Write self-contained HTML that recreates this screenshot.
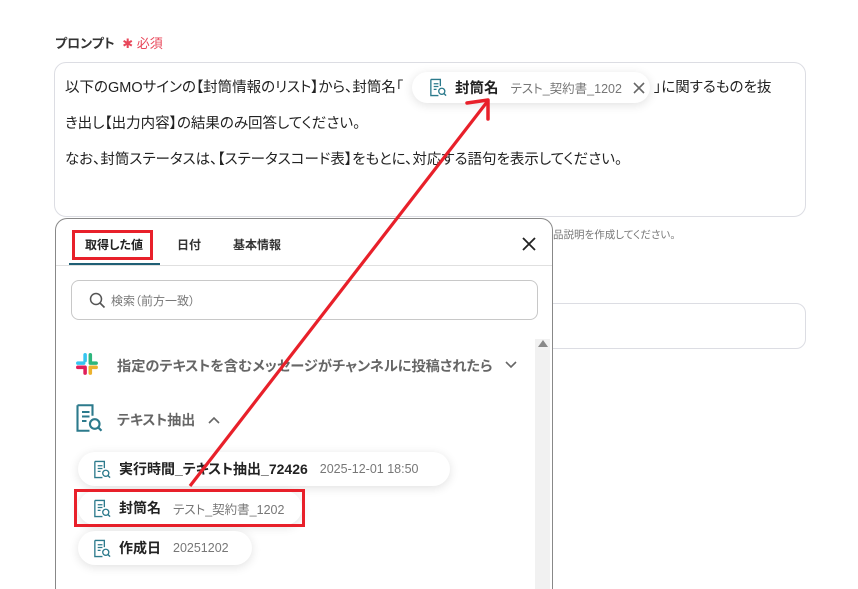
<!DOCTYPE html>
<html><head><meta charset="utf-8"><style>
*{box-sizing:border-box;margin:0;padding:0}
html,body{width:858px;height:589px;overflow:hidden}
body{background:#fff;position:relative;font-family:"Liberation Sans","Noto Sans CJK JP",sans-serif;color:#222;font-feature-settings:"palt"}
.abs{position:absolute}
.ta{left:54px;top:62px;width:752px;height:155px;border:1px solid #dcdde3;border-radius:12px}
.t{font-size:14.5px;white-space:nowrap;color:#222}
.chip{background:#fff;border-radius:17px;box-shadow:0 2px 10px rgba(0,0,0,.12);display:flex;align-items:center;white-space:nowrap}
.chip b{font-size:14px;color:#222;font-weight:700;margin-left:8px}
.chip span{font-size:12.5px;color:#777;margin-left:12px}
.panel{left:55px;top:218px;width:498px;height:371px;border:1px solid #888;border-bottom:none;border-radius:12px 12px 0 0;background:#fff;overflow:hidden}
</style></head><body>
<div class="abs t" style="left:55px;top:33px;font-size:13px;font-weight:700;color:#333">プロンプト <span style="color:#e8475a;font-weight:400;margin-left:4px">✱ 必須</span></div>
<div class="abs ta"></div>
<div class="abs t" style="left:65px;top:76px">以下のGMOサインの【封筒情報のリスト】から、封筒名「</div>
<div class="abs t" style="left:654px;top:76px">」に関するものを抜</div>
<div class="abs t" style="left:65px;top:112px">き出し【出力内容】の結果のみ回答してください。</div>
<div class="abs t" style="left:65px;top:148px">なお、封筒ステータスは、【ステータスコード表】をもとに、対応する語句を表示してください。</div>
<div class="abs t" style="left:553px;top:227px;font-size:10.5px;color:#777">品説明を作成してください。</div>
<div class="abs" style="left:540px;top:303px;width:266px;height:46px;border:1px solid #dcdde3;border-radius:10px"></div>

<svg width="0" height="0" style="position:absolute"><defs><symbol id="doc" viewBox="0 0 20 20"><path d="M3 1.5h10v7M3 1.5v17h8" fill="none" stroke="#2c7a8c" stroke-width="1.4"/><path d="M6 6h5M6 9h5M6 12h3" stroke="#2c7a8c" stroke-width="1.3"/><circle cx="14.5" cy="14" r="3.2" fill="none" stroke="#2c7a8c" stroke-width="1.4"/><path d="M16.8 16.3l2.2 2.2" stroke="#2c7a8c" stroke-width="1.5"/></symbol></defs></svg>

<div class="abs chip" style="left:412px;top:72px;height:31px;width:238px;padding-left:16px">
<svg width="19" height="19"><use href="#doc"/></svg><b style="font-size:14.5px">封筒名</b><span>テスト_契約書_1202</span>
<svg width="14" height="14" style="margin-left:10px" viewBox="0 0 14 14"><path d="M2 2l10 10M12 2L2 12" stroke="#666" stroke-width="1.6"/></svg></div>

<div class="abs panel">
<div class="abs" style="left:13px;top:44px;width:91px;height:3px;background:#1f5f75"></div>
<div class="abs" style="left:0;top:46px;width:496px;height:1px;background:#e0e0e0"></div>
<div class="abs" style="left:16px;top:11px;width:81px;height:30px;border:3px solid #e8202a"></div>
<div class="abs t" style="left:29px;top:17px;font-size:12px;font-weight:700">取得した値</div>
<div class="abs t" style="left:121px;top:17px;font-size:12px;font-weight:700;color:#333">日付</div>
<div class="abs t" style="left:177px;top:17px;font-size:12px;font-weight:700;color:#333">基本情報</div>
<svg class="abs" style="left:465px;top:17px" width="16" height="16" viewBox="0 0 16 16"><path d="M2 2l12 12M14 2L2 14" stroke="#222" stroke-width="1.8"/></svg>
<div class="abs" style="left:15px;top:61px;width:467px;height:40px;border:1px solid #c8c8c8;border-radius:8px"></div>
<svg class="abs" style="left:33px;top:73px" width="17" height="17" viewBox="0 0 17 17"><circle cx="7" cy="7" r="5.5" fill="none" stroke="#555" stroke-width="1.5"/><path d="M11 11l4.5 4.5" stroke="#555" stroke-width="1.6"/></svg>
<div class="abs t" style="left:55px;top:73px;font-size:12px;color:#777">検索（前方一致）</div>
<div class="abs" style="left:479px;top:120px;width:15px;height:260px;background:#f1f1f1"></div>
<div class="abs" style="left:482px;top:121px;width:0;height:0;border-left:5px solid transparent;border-right:5px solid transparent;border-bottom:7px solid #888"></div>
<svg class="abs" style="left:19px;top:133px" width="25" height="25" viewBox="0 0 24 24">
<rect x="1" y="9" width="9" height="3.4" rx="1.7" fill="#36c5f0"/><rect x="8" y="1" width="3.4" height="9" rx="1.7" fill="#36c5f0"/>
<rect x="13" y="1" width="3.4" height="10" rx="1.7" fill="#2eb67d"/><rect x="13" y="9" width="9" height="3.4" rx="1.7" fill="#2eb67d"/>
<rect x="13" y="13" width="9" height="3.4" rx="1.7" fill="#ecb22e"/><rect x="13" y="13" width="3.4" height="9" rx="1.7" fill="#ecb22e"/>
<rect x="1" y="13" width="10" height="3.4" rx="1.7" fill="#e01e5a"/><rect x="8" y="13" width="3.4" height="9" rx="1.7" fill="#e01e5a"/></svg>
<div class="abs t" style="left:61px;top:137px;font-size:14.2px;color:#666;font-weight:700">指定のテキストを含むメッセージがチャンネルに投稿されたら</div>
<svg class="abs" style="left:449px;top:142px" width="12" height="8" viewBox="0 0 12 8"><path d="M1 1l5 5 5-5" fill="none" stroke="#666" stroke-width="1.6"/></svg>
<svg class="abs" style="left:17px;top:184px" width="30" height="30"><use href="#doc"/></svg>
<div class="abs t" style="left:61px;top:191px;font-size:14px;color:#666;font-weight:700">テキスト抽出</div>
<svg class="abs" style="left:152px;top:197px" width="12" height="8" viewBox="0 0 12 8"><path d="M1 7l5-5 5 5" fill="none" stroke="#666" stroke-width="1.6"/></svg>
</div>

<div class="abs chip" style="left:78px;top:452px;height:34px;width:372px;padding-left:14px"><svg width="19" height="19"><use href="#doc"/></svg><b>実行時間_テキスト抽出_72426</b><span>2025-12-01 18:50</span></div>
<div class="abs chip" style="left:78px;top:491px;height:34px;width:224px;padding-left:14px"><svg width="19" height="19"><use href="#doc"/></svg><b>封筒名</b><span>テスト_契約書_1202</span></div>
<div class="abs" style="left:74px;top:489px;width:231px;height:38px;border:3px solid #e8202a"></div>
<div class="abs chip" style="left:78px;top:531px;height:34px;width:174px;padding-left:14px"><svg width="19" height="19"><use href="#doc"/></svg><b>作成日</b><span>20251202</span></div>

<svg class="abs" style="left:0;top:0" width="858" height="589"><path d="M190 486L487 102" stroke="#e8202a" stroke-width="3.2" fill="none"/><path d="M467 103L488 100L488 119" stroke="#e8202a" stroke-width="3.5" fill="none" stroke-linecap="round" stroke-linejoin="round"/></svg>
</body></html>
